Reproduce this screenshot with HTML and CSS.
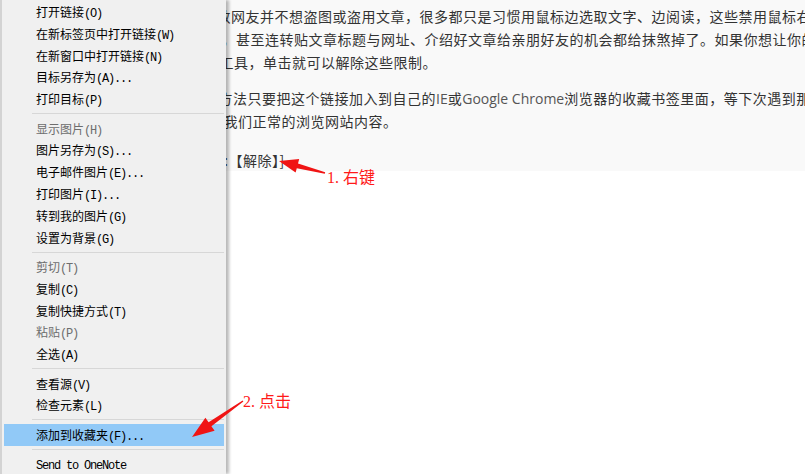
FILE: index.html
```html
<!DOCTYPE html>
<html lang="zh-CN">
<head>
<meta charset="utf-8">
<title>右键菜单</title>
<link rel="stylesheet" href="styles.css">
</head>
<body>
<div class="page">
  <div class="article">
    <p class="para">
      <span class="line l1">数网友并不想盗图或盗用文章，很多都只是习惯用鼠标边选取文字、边阅读，这些禁用鼠标右键的网站</span>
      <span class="line l2">，甚至连转贴文章标题与网址、介绍好文章给亲朋好友的机会都给抹煞掉了。如果你想让你的浏览器</span>
      <span class="line l3">工具，单击就可以解除这些限制。</span>
    </p>
    <p class="para">
      <span class="line l4">方法只要把这个链接加入到自己的<span class="lat">IE</span>或<span class="lat">Google Chrome</span>浏览器的收藏书签里面，等下次遇到那些网站</span>
      <span class="line l5">我们正常的浏览网站内容。</span>
    </p>
    <p class="para last">
      <span class="line l6">:【解除】]</span>
    </p>
  </div>
</div>

<ul class="ctxmenu">
  <li class="item">打开链接<span class="k">(O)</span></li>
  <li class="item">在新标签页中打开链接<span class="k">(W)</span></li>
  <li class="item">在新窗口中打开链接<span class="k">(N)</span></li>
  <li class="item">目标另存为<span class="k">(A)...</span></li>
  <li class="item">打印目标<span class="k">(P)</span></li>
  <li class="sep"></li>
  <li class="item off">显示图片<span class="k">(H)</span></li>
  <li class="item">图片另存为<span class="k">(S)...</span></li>
  <li class="item">电子邮件图片<span class="k">(E)...</span></li>
  <li class="item">打印图片<span class="k">(I)...</span></li>
  <li class="item">转到我的图片<span class="k">(G)</span></li>
  <li class="item">设置为背景<span class="k">(G)</span></li>
  <li class="sep"></li>
  <li class="item off">剪切<span class="k">(T)</span></li>
  <li class="item">复制<span class="k">(C)</span></li>
  <li class="item">复制快捷方式<span class="k">(T)</span></li>
  <li class="item off">粘贴<span class="k">(P)</span></li>
  <li class="item">全选<span class="k">(A)</span></li>
  <li class="sep"></li>
  <li class="item">查看源<span class="k">(V)</span></li>
  <li class="item">检查元素<span class="k">(L)</span></li>
  <li class="sep"></li>
  <li class="item hot">添加到收藏夹<span class="k">(F)...</span></li>
  <li class="sep"></li>
  <li class="item"><span class="k">Send to OneNote</span></li>
</ul>

<svg class="arrows" width="805" height="474" viewBox="0 0 805 474" aria-hidden="true">
  <polygon fill="#f01414" points="279,161 299.2,159 298,163.4 325.2,172.3 324.8,173.7 296.8,168.2 295.6,172.6"/>
  <polygon fill="#f01414" points="192,437 205.4,417.8 208.6,422.3 242.6,400.4 243.4,401.6 211.4,426.3 214.6,430.8"/>
</svg>
<div class="note n1">1. 右键</div>
<div class="note n2">2. 点击</div>
</body>
</html>
```

FILE: styles.css
```css
html, body {
  margin: 0;
  padding: 0;
  width: 805px;
  height: 474px;
  overflow: hidden;
  background: #ffffff;
}

.page {
  width: 805px;
  height: 474px;
  background: #ffffff;
}

.article {
  box-sizing: border-box;
  height: 171px;
  padding-top: 5px;
  background: #f9f9f9;
  overflow: hidden;
  font-family: "Noto Sans CJK SC", "Open Sans", sans-serif;
  font-size: 14px;
  letter-spacing: 0.5px;
  line-height: 23px;
  color: #333333;
}

.para {
  margin: 0 0 13px 0;
}

.para.last {
  margin-top: 16px;
}

.line {
  display: block;
  white-space: nowrap;
}

.lat {
  font-family: "Open Sans", "Liberation Sans", sans-serif;
  letter-spacing: 0;
  color: #555555;
}

.l1 { padding-left: 216.5px; }
.l2 { padding-left: 221.5px; }
.l3 { padding-left: 219.5px; }
.l4 { padding-left: 218.5px; }
.l5 { padding-left: 223.5px; }
.l6 { padding-left: 224px; }

/* context menu */
.ctxmenu {
  position: absolute;
  left: 0;
  top: 0;
  box-sizing: border-box;
  width: 226px;
  height: 474px;
  margin: 0;
  padding: 1px 0 0 0;
  list-style: none;
  background: #f0f0f0;
  border-left: 2px solid #d3d3d3;
  box-shadow: 3px 0 3px rgba(0, 0, 0, 0.28);
  font-family: "Noto Sans CJK SC", sans-serif;
  font-size: 12px;
  color: #000000;
}

.item {
  height: 21.8px;
  line-height: 21.8px;
  margin: 0 2px;
  padding-left: 32px;
  white-space: nowrap;
}

.item.off {
  color: #6d6d6d;
}

.item.hot {
  background: #91c9f7;
}

.k {
  font-family: "Liberation Mono", monospace;
  font-size: 12px;
  letter-spacing: -1.2px;
}

.sep {
  height: 1px;
  margin: 3.3px 2px 3.3px 30px;
  background: #d7d7d7;
}

/* annotations */
.arrows {
  position: absolute;
  left: 0;
  top: 0;
  pointer-events: none;
}

.note {
  position: absolute;
  font-family: "Liberation Serif", "Noto Sans CJK SC", serif;
  font-size: 16px;
  line-height: 20px;
  color: #ff1a1a;
  white-space: nowrap;
}

.n1 {
  left: 327px;
  top: 168px;
}

.n2 {
  left: 243px;
  top: 392px;
}
```
